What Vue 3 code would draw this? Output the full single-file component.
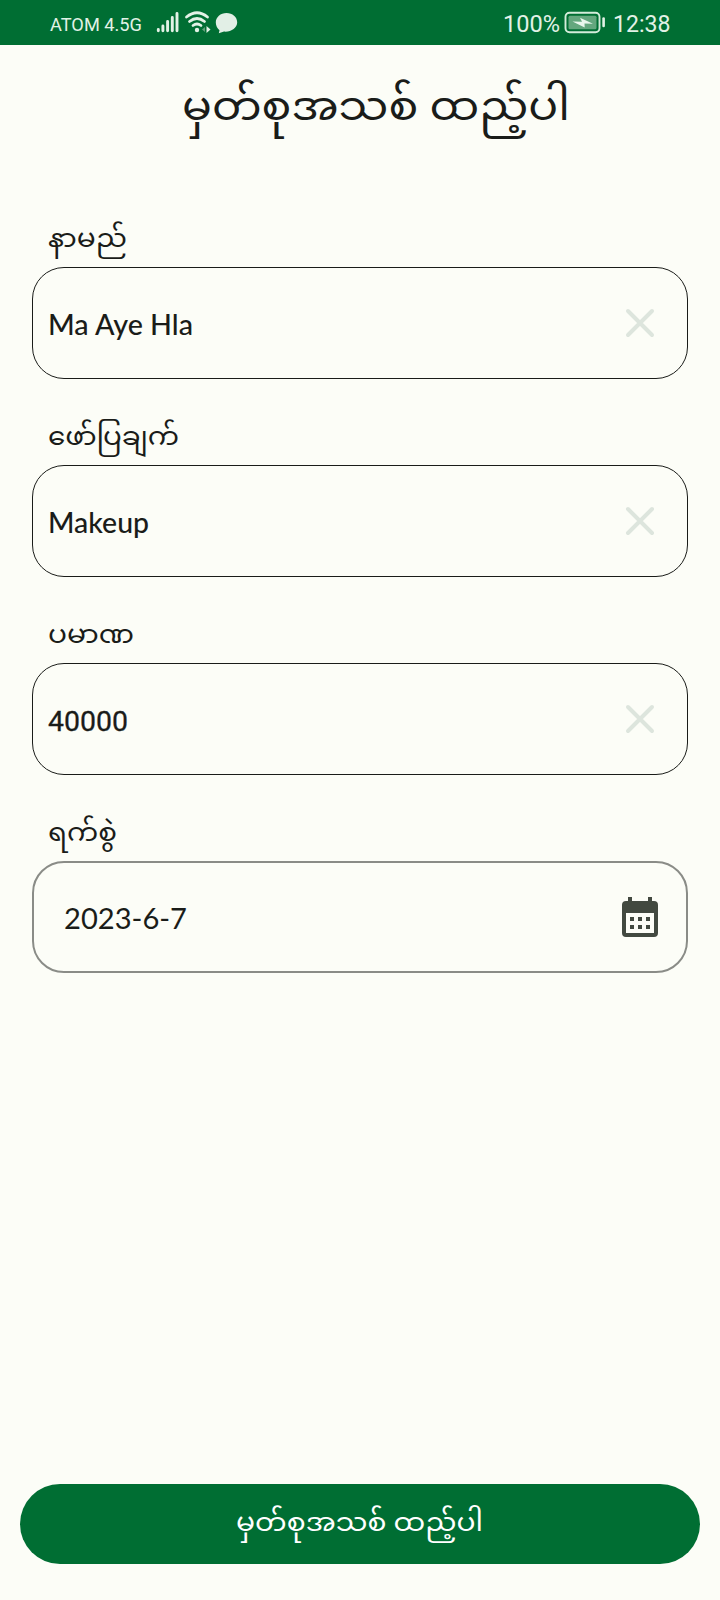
<script setup>
const title = 'မှတ်စုအသစ် ထည့်ပါ'
const fields = [
  { label: 'နာမည်', value: 'Ma Aye Hla', labelWidth: 79, width: 145 },
  { label: 'ဖော်ပြချက်', value: 'Makeup', labelWidth: 131, width: 101 },
  { label: 'ပမာဏ', value: '40000', labelWidth: 86, width: 80, numeric: true },
  { label: 'ရက်စွဲ', value: '2023-6-7', labelWidth: 69, width: 123, date: true },
]
</script>

<template>
  <div class="screen">
    <header class="status">
      <svg class="status-art" width="720" height="45" viewBox="0 0 720 45">
        <text x="50" y="30.5" font-size="19" textLength="92" lengthAdjust="spacingAndGlyphs">ATOM 4.5G</text>
        <path d="M158.3 29.500v1.300M162.900 26v4.800M167.600 21.500v9.300M172.300 17.500v13.300M177 13.500v17.300" stroke="#e2f2e6" stroke-width="2.900" stroke-linecap="round" />
        <path d="M186.500 17Q197 8.500 207.500 17M189.500 21.500Q197 15.500 204.500 21.500M193 25.500Q197 22.500 201 25.500" fill="none" stroke="#e2f2e6" stroke-width="2.800" stroke-linecap="round" />
        <circle cx="197" cy="30" r="2.200" fill="#e2f2e6" />
        <path d="M206.500 26v7l4-3.500z" fill="#e2f2e6" />
        <path d="M205 27v5l-3-2.500z" fill="#5f9f78" />
        <path d="M226.500 13C220.500 13 215.800 17.200 215.800 22.500C215.800 25.700 217.400 28.500 219.500 30.200L218.800 33.200L224 31.600C231 32.200 237.200 28 237.200 22.300C237.200 17 232.500 13 226.500 13Z" fill="#e2efe6" />
        <text x="503" y="31.500" font-size="24" textLength="57" lengthAdjust="spacingAndGlyphs">100%</text>
        <rect x="565.500" y="12.700" width="34" height="19.600" rx="4" fill="none" stroke="#d3ecda" stroke-width="1.900" />
        <rect x="568.500" y="15.700" width="28" height="13.600" rx="1.500" fill="#64a77e" />
        <path d="M572.500 21.500L582 21.700L580 17.700L593 23.800L584.500 23.500L584.700 27.500Z" fill="#e9f7ed" />
        <path d="M603.600 18.500v7.500" stroke="#e2f2e6" stroke-width="2.600" stroke-linecap="round" />
        <text x="613" y="31.500" font-size="24" textLength="57.500" lengthAdjust="spacingAndGlyphs">12:38</text>
      </svg>
    </header>

    <h1 class="title">
      <svg width="388" height="90" viewBox="0 0 388 90">
        <text x="0" y="59" font-size="39.500" textLength="388" lengthAdjust="spacingAndGlyphs">{{ title }}</text>
      </svg>
    </h1>

    <main class="form">
      <section v-for="f in fields" :key="f.label" class="group">
        <div class="label">
          <svg width="200" height="52" viewBox="0 0 200 52">
            <text x="0" y="32" font-size="25.200" :textLength="f.labelWidth" lengthAdjust="spacingAndGlyphs">{{ f.label }}</text>
          </svg>
        </div>
        <div class="field" :class="{ date: f.date, numeric: f.numeric }">
          <svg class="value" width="300" height="50" viewBox="0 0 300 50">
            <text x="0" y="37" font-size="28.500" :textLength="f.width" lengthAdjust="spacingAndGlyphs">{{ f.value }}</text>
          </svg>
          <svg v-if="f.date" class="icon" width="36" height="40" viewBox="0 0 36 40">
            <path fill="#424940" fill-rule="evenodd" d="M6 0h4v4h16V0h4v4h2a4 4 0 0 1 4 4v28a4 4 0 0 1-4 4H4a4 4 0 0 1-4-4V8a4 4 0 0 1 4-4h2zM4 16v20h28V16zM8 20h4v4H8zM16 20h4v4h-4zM24 20h4v4h-4zM8 28h4v4H8zM16 28h4v4h-4zM24 28h4v4h-4z" />
          </svg>
          <svg v-else class="icon" width="36" height="40" viewBox="0 0 36 40">
            <path d="M6 8l24 24M30 8L6 32" stroke="#dde5dd" stroke-width="4" stroke-linecap="round" />
          </svg>
        </div>
      </section>
    </main>

    <button class="submit">
      <svg width="248" height="60" viewBox="0 0 248 60">
        <text x="0" y="37" font-size="25.200" textLength="247" lengthAdjust="spacingAndGlyphs">{{ title }}</text>
      </svg>
    </button>
  </div>
</template>

<style>
body {
  background: #fcfdf7;
}
</style>

<style scoped>
.screen {
  width: 720px;
  height: 1600px;
  display: flex;
  flex-direction: column;
  background: #fcfdf7;
  color: #1a1c19;
  font-family: Lato, "Noto Sans Myanmar", "Noto Sans", sans-serif;
}
svg {
  display: block;
  overflow: visible;
}
text {
  fill: currentColor;
}
.status {
  height: 45px;
  background: #006e33;
  color: #e2f2e6;
  font-family: Roboto, sans-serif;
}
.title {
  margin: 16px 0 0 182px;
  height: 90px;
  font-weight: 400;
}
.form {
  margin-top: 64px;
}
.group {
  height: 198px;
}
.label {
  height: 52px;
  padding-left: 48px;
}
.field {
  box-sizing: border-box;
  width: 656px;
  height: 112px;
  margin-left: 32px;
  padding: 0 29px 0 15px;
  border: 1px solid #1a1c19;
  border-radius: 32px;
  display: flex;
  align-items: center;
  justify-content: space-between;
}
.value {
  font-weight: 500;
}
.numeric .value {
  font-family: Roboto, sans-serif;
  font-weight: 400;
  stroke: #1a1c19;
  stroke-width: 0.3px;
}
.date {
  border: 2px solid #8a8c87;
  padding: 0 28px 0 30px;
}
.date .value {
  font-weight: 400;
}
.submit {
  width: 680px;
  height: 80px;
  margin: auto 20px 36px;
  padding: 0;
  border: 0;
  border-radius: 40px;
  background: #006e33;
  color: #fff;
  font-family: inherit;
  font-weight: 400;
  display: flex;
  align-items: center;
  justify-content: center;
}
</style>
